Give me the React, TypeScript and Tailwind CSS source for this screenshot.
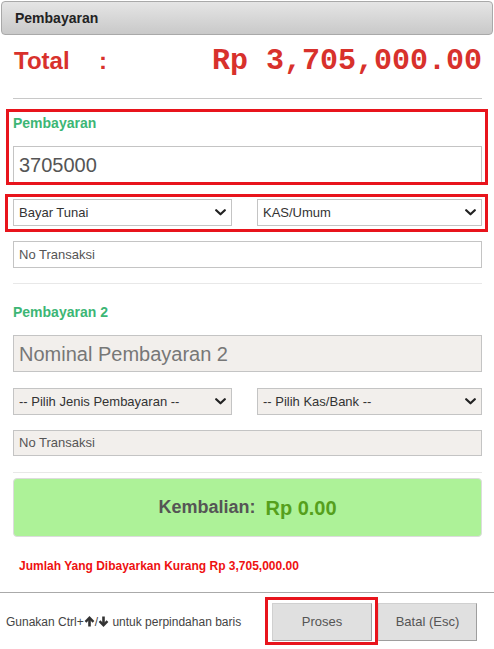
import React from "react";

const Chevron = () => (
  <svg width="11" height="7" viewBox="0 0 11 7" className="shrink-0">
    <polyline points="1.2,1.2 5.5,5.3 9.8,1.2" fill="none" stroke="#222" strokeWidth="2.2" strokeLinecap="round" strokeLinejoin="round" />
  </svg>
);

const Select = ({ label, className, bg }: { label: string; className: string; bg: string }) => (
  <div className={`${className} ${bg} h-full border border-[#c4c4c4] flex items-center pl-[5px] pr-[5px] text-[13px] text-[#333]`}>
    <span className="flex-1 truncate">{label}</span>
    <Chevron />
  </div>
);

const UpArrow = () => (
  <svg width="11" height="11" viewBox="0 0 11 11" className="inline-block align-[-1px]">
    <polyline points="1.5,5.8 5.5,1.8 9.5,5.8" fill="none" stroke="#333" strokeWidth="2.4" strokeLinejoin="miter" />
    <line x1="5.5" y1="2.5" x2="5.5" y2="10.5" stroke="#333" strokeWidth="2.6" />
  </svg>
);
const DownArrow = () => (
  <svg width="11" height="11" viewBox="0 0 11 11" className="inline-block align-[-1px]">
    <polyline points="1.5,5.2 5.5,9.2 9.5,5.2" fill="none" stroke="#333" strokeWidth="2.4" strokeLinejoin="miter" />
    <line x1="5.5" y1="0.5" x2="5.5" y2="8.5" stroke="#333" strokeWidth="2.6" />
  </svg>
);

export default function App() {
  return (
    <div className="w-[494px] h-[649px] bg-white overflow-hidden font-['Liberation_Sans',Arial,sans-serif]">
      <div className="mx-[1px] mt-[1px] h-[34px] border border-[#a9a9a9] rounded-[4px] bg-gradient-to-b from-[#e5e5e5] to-[#c9c9c9] flex items-center pl-[13px] text-[14px] font-bold text-[#222]">
        Pembayaran
      </div>

      <div className="pl-[13px] pr-[12px]">
        <div className="h-[52px] flex items-center text-[#d8312c]">
          <span className="w-[86px] pl-[1px] text-[24px] font-bold">Total</span>
          <span className="text-[24px] font-bold">:</span>
          <span className="ml-auto font-['Liberation_Mono','Courier_New',monospace] text-[30px] font-bold leading-none">Rp 3,705,000.00</span>
        </div>

        <div className="mt-[11px] border-t border-[#c8c8c8]" />

        <div className="relative mt-[14px]">
          <div className="h-[20px] leading-[20px] text-[14px] font-bold text-[#3cb675]">Pembayaran</div>
          <div className="mt-[13px] h-[38px] border border-[#c4c4c4] flex items-center pl-[5px] text-[20px] text-[#555]">3705000</div>
          <div className="absolute -top-[4px] -left-[7px] -right-[6px] -bottom-[1px] border-[3px] border-[#e8141c]" />
        </div>

        <div className="relative mt-[15px] h-[27px] flex gap-[25px]">
          <Select label="Bayar Tunai" className="w-[219px]" bg="bg-white" />
          <Select label="KAS/Umum" className="flex-1" bg="bg-white" />
          <div className="absolute -top-[5px] -left-[8px] -right-[6px] -bottom-[6px] border-[3px] border-[#e8141c]" />
        </div>

        <div className="mt-[15px] h-[27px] border border-[#c4c4c4] flex items-center pl-[5px] text-[13px] text-[#555]">No Transaksi</div>

        <div className="mt-[15px] border-t border-[#e8e8e8]" />

        <div className="mt-[18px] h-[20px] leading-[20px] text-[14px] font-bold text-[#3cb675]">Pembayaran 2</div>
        <div className="mt-[13px] h-[37px] border border-[#c4c4c4] bg-[#f2efec] flex items-center pl-[5px] text-[20px] text-[#777]">Nominal Pembayaran 2</div>

        <div className="mt-[16px] h-[27px] flex gap-[25px]">
          <Select label="-- Pilih Jenis Pembayaran --" className="w-[219px]" bg="bg-[#f2efec]" />
          <Select label="-- Pilih Kas/Bank --" className="flex-1" bg="bg-[#f2efec]" />
        </div>

        <div className="mt-[15px] h-[26px] border border-[#c4c4c4] bg-[#f2efec] flex items-center pl-[5px] text-[13px] text-[#555]">No Transaksi</div>

        <div className="mt-[16px] border-t border-[#e8e8e8]" />

        <div className="mt-[5px] h-[59px] rounded-[4px] border border-[#dcdcdc] bg-[#adf298] flex items-center justify-center gap-[10px]">
          <span className="text-[18px] font-bold text-[#555]">Kembalian:</span>
          <span className="text-[20px] font-bold text-[#55a01c]">Rp 0.00</span>
        </div>

        <div className="mt-[21px] pl-[6px] h-[16px] leading-[16px] text-[12px] font-bold text-[#ee1111]">
          Jumlah Yang Dibayarkan Kurang Rp 3,705,000.00
        </div>
      </div>

      <div className="mt-[18px] border-t border-[#aaaaaa]" />

      <div className="flex items-center pl-[6px] mt-[10px]">
        <span className="text-[12px] text-[#444]">
          Gunakan Ctrl+<UpArrow />/<DownArrow /> untuk perpindahan baris
        </span>
        <div className="ml-auto mr-[17px] flex gap-[6px]">
          <div className="relative">
            <div className="w-[100px] h-[38px] bg-[#e0e0e0] border border-[#d0d0d0] border-b-[#9e9e9e] border-r-[#9e9e9e] flex items-center justify-center text-[13px] text-[#555]">Proses</div>
            <div className="absolute -top-[6px] -left-[7px] -right-[6px] -bottom-[4px] border-[3px] border-[#e8141c]" />
          </div>
          <div className="w-[99px] h-[38px] bg-[#e0e0e0] border border-[#d0d0d0] border-b-[#9e9e9e] border-r-[#9e9e9e] flex items-center justify-center text-[13px] text-[#555]">Batal (Esc)</div>
        </div>
      </div>
    </div>
  );
}
